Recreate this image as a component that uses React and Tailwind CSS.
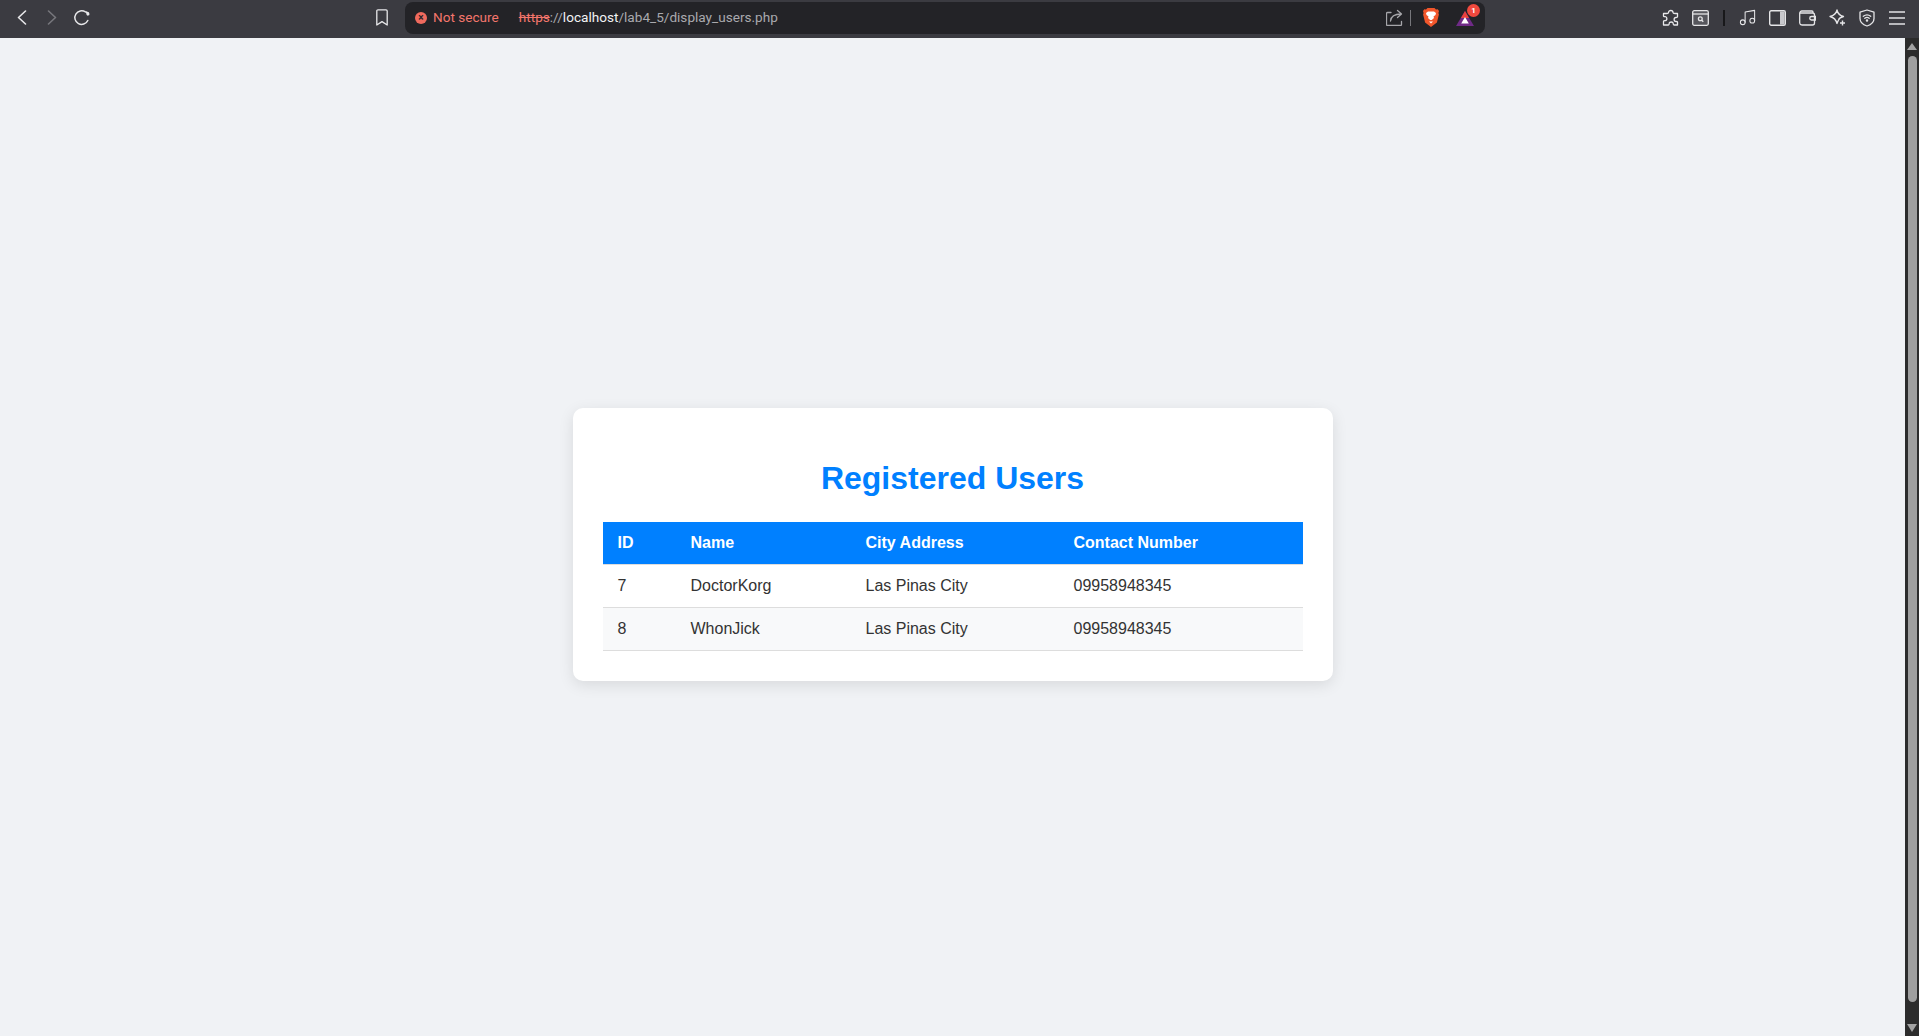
import { Music } from 'lucide-react';

const USERS = [
  { id: 7, name: 'DoctorKorg', city: 'Las Pinas City', phone: '09958948345' },
  { id: 8, name: 'WhonJick', city: 'Las Pinas City', phone: '09958948345' },
];

function Chevron({ d, color }) {
  return (
    <svg width="10" height="15" viewBox="0 0 10 15" fill="none" stroke={color} strokeWidth="1.6" strokeLinecap="round" strokeLinejoin="round">
      <path d={d} />
    </svg>
  );
}

function Reload() {
  return (
    <svg width="18" height="18" viewBox="0 0 18 18" fill="none" stroke="#e8e8ea" strokeWidth="1.5" strokeLinecap="round">
      <path d="M14.800 11.500A6.800 6.800 0 1 1 12.500 3" />
      <path d="M12.200 1.800l4 1.600-1.900 3.300z" fill="#e8e8ea" stroke="none" />
      <circle cx="15" cy="5" r="1.500" fill="#e8e8ea" stroke="none" />
    </svg>
  );
}

function BookmarkIcon() {
  return (
    <svg width="12" height="17" viewBox="0 0 12 17" fill="none" stroke="#e8e8ea" strokeWidth="1.300" strokeLinejoin="round">
      <path d="M2 .8h8a1.200 1.200 0 0 1 1.200 1.200v14L6 12.600.8 16V2A1.200 1.200 0 0 1 2 .8z" />
    </svg>
  );
}

function Share() {
  return (
    <svg width="17" height="17" viewBox="0 0 17 17" fill="none" stroke="#a6a6aa" strokeWidth="1.300" strokeLinecap="round" strokeLinejoin="round">
      <path d="M5 3.500H1.500a1 1 0 0 0-1 1v11a1 1 0 0 0 1 1h13a1 1 0 0 0 1-1v-3" />
      <path d="M4.500 12c.5-4.500 3.500-7 10.500-7M11.500 1.500L15.500 5l-4 3.500" />
    </svg>
  );
}

function BraveLion() {
  return (
    <svg width="16" height="19" viewBox="0 0 16 19">
      <path d="M4.500 0h7l1.500 1.500 1.700-.3L16 3l-.6 2 .5 1.500-2 8L8 19l-5.900-4.500-2-8L.6 5 0 3l1.300-1.800L3 1.500z" fill="#f1562b" />
      <path d="M5 3.500h6l2 1.500-.5 2-2 1.500.5 1.500L8.800 12h-1.600L5 10l.5-1.500-2-1.500L3 5z" fill="#ffffff" />
      <path d="M6 13.500h4L8 15.500z" fill="#ffffff" />
    </svg>
  );
}

function Rewards() {
  return (
    <svg width="18" height="15" viewBox="0 0 18 15" className="block">
      <path d="M9 0L18 15H0Z" fill="#6f2a87" />
      <path d="M9 0L13 7H5Z" fill="#e8413c" />
      <path d="M9 6L12.800 12.500H5.200Z" fill="#ffffff" />
    </svg>
  );
}

function PuzzleIcon() {
  return (
    <svg width="18" height="18" viewBox="0 0 18 18" fill="none" stroke="#e8e8ea" strokeWidth="1.300" strokeLinejoin="round">
      <path d="M6.500 3.500C6.500 .8 11 .8 11 3.500c0 1 1 1 2 1h2.500v3.200c0 .8-1 .8-1.500.8-2.500 0-2.500 4 0 4 .5 0 1.500 0 1.500.8V16h-3.500c-.8 0-.8-1-.8-1.500 0-2-4-2-4 0 0 .5 0 1.500-.8 1.500H1.500v-3.500c0-.8 1-.8 1.500-.8 2.500 0 2.500-4 0-4-.5 0-1.500 0-1.500-.8V4.500h3.500c.8 0 1.500-.2 1.500-1z" />
    </svg>
  );
}

function SearchTab() {
  return (
    <svg width="17" height="16" viewBox="0 0 17 16" fill="none" stroke="#e5e5e7" strokeWidth="1.300">
      <rect x=".7" y=".7" width="15.600" height="14.600" rx="1.500" fill="#56565c" />
      <path d="M.7 4h15.600" />
      <circle cx="8.300" cy="8.700" r="1.900" />
      <path d="M9.800 10.200l1.500 1.500" />
    </svg>
  );
}

function SidePanel() {
  return (
    <svg width="17" height="16" viewBox="0 0 17 16">
      <rect x=".7" y=".7" width="15.600" height="14.600" rx="1.500" fill="none" stroke="#e5e5e7" strokeWidth="1.400" />
      <rect x="11" y="1.400" width="4.600" height="13.200" fill="#c8c8cc" />
    </svg>
  );
}

function Wallet() {
  return (
    <svg width="17" height="16" viewBox="0 0 17 16" fill="none" stroke="#e5e5e7" strokeWidth="1.300">
      <path d="M14 3V2a1 1 0 0 0-1-1H3a2.200 2.200 0 0 0-2.300 2.200V13A2.300 2.300 0 0 0 3 15h10.500a2 2 0 0 0 2-2V5a2 2 0 0 0-2-2H.9" />
      <path d="M16.500 6.500h-4a1.500 1.500 0 0 0 0 3.500h4z" />
    </svg>
  );
}

function Sparkle() {
  return (
    <svg width="17" height="17" viewBox="0 0 17 17" fill="none" stroke="#e5e5e7" strokeWidth="1.300" strokeLinejoin="round">
      <path d="M8 1c.7 3.500 2.500 5.500 6.500 6.500-3 .7-4.500 2-5 3.500L8 14.500C7 10.500 5 8.500 1 7.500 5 6.500 7.200 4.500 8 1z" />
      <path d="M13.500 11.500v5M11 14h5" strokeWidth="1.400" />
    </svg>
  );
}

function Vpn() {
  return (
    <svg width="16" height="18" viewBox="0 0 16 18" fill="none" stroke="#e5e5e7" strokeWidth="1.300" strokeLinecap="round" strokeLinejoin="round">
      <path d="M8 1l7 2.200v6.300c0 3.700-3 6.200-7 7.500-4-1.300-7-3.800-7-7.500V3.200z" />
      <path d="M4.300 7.300c2.200-1.700 5.200-1.700 7.400 0M5.800 9.300c1.300-1 3.100-1 4.400 0" />
      <circle cx="8" cy="11.500" r=".6" fill="#e5e5e7" />
    </svg>
  );
}

function Toolbar() {
  return (
    <header className="h-[38px] shrink-0 flex items-center bg-[#3b3b41] pb-[3px] font-['Roboto',sans-serif]">
      <span className="ml-[17px] flex"><Chevron d="M8.500 1L1.500 7.500l7 6.500" color="#e8e8ea" /></span>
      <span className="ml-[20px] flex"><Chevron d="M1.500 1l7 6.500-7 6.500" color="#77777c" /></span>
      <span className="ml-[16px] flex"><Reload /></span>
      <span className="ml-[285px] flex"><BookmarkIcon /></span>
      <div className="ml-[17px] w-[1080px] h-[32px] flex items-center rounded-[8px] bg-[#232327] text-[13.6px]">
        <span className="ml-[10px] w-[12px] h-[12px] rounded-full bg-[#ef6a5e] flex items-center justify-center text-[10px] leading-none font-bold text-[#232327]">×</span>
        <span className="ml-[6px] text-[#f4766c]">Not secure</span>
        <span className="ml-[20px] text-[#f4766c] line-through">https</span>
        <span className="text-[#a9a9ae]">://</span>
        <span className="text-[#f2f2f4]">localhost</span>
        <span className="text-[#a9a9ae]">/lab4_5/display_users.php</span>
        <span className="ml-auto flex"><Share /></span>
        <span className="ml-[7px] w-px h-[16px] bg-[#77777c]" />
        <span className="ml-[12px] flex"><BraveLion /></span>
        <span className="relative ml-[17px] mr-[11px] mt-[2px]">
          <Rewards />
          <span className="absolute -top-[7px] -right-[6px] w-[13px] h-[13px] rounded-full bg-[#f0493e] flex items-center justify-center text-[8px] leading-none font-bold text-white">1</span>
        </span>
      </div>
      <span className="ml-[171px] w-[30px] flex justify-center"><PuzzleIcon /></span>
      <span className="w-[29px] flex justify-center"><SearchTab /></span>
      <span className="ml-[8px] w-[2px] h-[16px] bg-[#18181a]" />
      <span className="ml-[7px] w-[30px] flex justify-center"><Music className="w-[19px] h-[19px] text-[#e8e8ea]" strokeWidth={1.3} /></span>
      <span className="w-[30px] flex justify-center"><SidePanel /></span>
      <span className="w-[30px] flex justify-center"><Wallet /></span>
      <span className="w-[30px] flex justify-center"><Sparkle /></span>
      <span className="w-[30px] flex justify-center"><Vpn /></span>
      <span className="w-[30px] flex flex-col items-center gap-[4px]">
        <span className="w-[16px] h-[2px] bg-[#b8b8bc]" />
        <span className="w-[16px] h-[2px] bg-[#b8b8bc]" />
        <span className="w-[16px] h-[2px] bg-[#b8b8bc]" />
      </span>
    </header>
  );
}

function Scrollbar() {
  return (
    <aside className="w-[14px] shrink-0 bg-[#2c2c2c] flex flex-col items-center pt-[5px] pb-[4px]">
      <span className="w-0 h-0 border-x-[5px] border-x-transparent border-b-[7px] border-b-[#a3a3a3]" />
      <span className="w-[9px] h-[946px] mt-[6px] rounded-full bg-[#9f9f9f]" />
      <span className="mt-auto w-0 h-0 border-x-[5px] border-x-transparent border-t-[8px] border-t-[#a3a3a3]" />
    </aside>
  );
}

export default function App() {
  return (
    <div className="h-screen flex flex-col overflow-hidden font-['Liberation_Sans',Arial,sans-serif]">
      <Toolbar />
      <div className="flex-1 min-h-0 flex">
        <main className="flex-1 bg-[#f0f2f5] flex justify-center pt-[370px]">
          <div className="w-[760px] h-[273px] p-[30px] bg-white rounded-[10px] shadow-[0_4px_15px_rgba(0,0,0,0.1)]">
            <h1 className="mt-[22px] mb-[25px] text-center text-[32px] leading-[37px] font-bold text-[#0080ff]">
              Registered Users
            </h1>
            <table className="w-full table-fixed border-collapse text-[16px] leading-[18px] text-[#333]">
              <colgroup>
                <col className="w-[73px]" />
                <col className="w-[175px]" />
                <col className="w-[208px]" />
                <col />
              </colgroup>
              <thead>
                <tr className="bg-[#0080ff] text-white text-left border-b border-[#ddd]">
                  <th className="py-[12px] px-[15px] font-bold">ID</th>
                  <th className="py-[12px] px-[15px] font-bold">Name</th>
                  <th className="py-[12px] px-[15px] font-bold">City Address</th>
                  <th className="py-[12px] px-[15px] font-bold">Contact Number</th>
                </tr>
              </thead>
              <tbody>
                {USERS.map((u, i) => (
                  <tr key={u.id} className={`border-b border-[#ddd] ${i % 2 ? 'bg-[#f8f9fa]' : 'bg-white'}`}>
                    <td className="py-[12px] px-[15px]">{u.id}</td>
                    <td className="py-[12px] px-[15px]">{u.name}</td>
                    <td className="py-[12px] px-[15px]">{u.city}</td>
                    <td className="py-[12px] px-[15px]">{u.phone}</td>
                  </tr>
                ))}
              </tbody>
            </table>
          </div>
        </main>
        <Scrollbar />
      </div>
    </div>
  );
}
